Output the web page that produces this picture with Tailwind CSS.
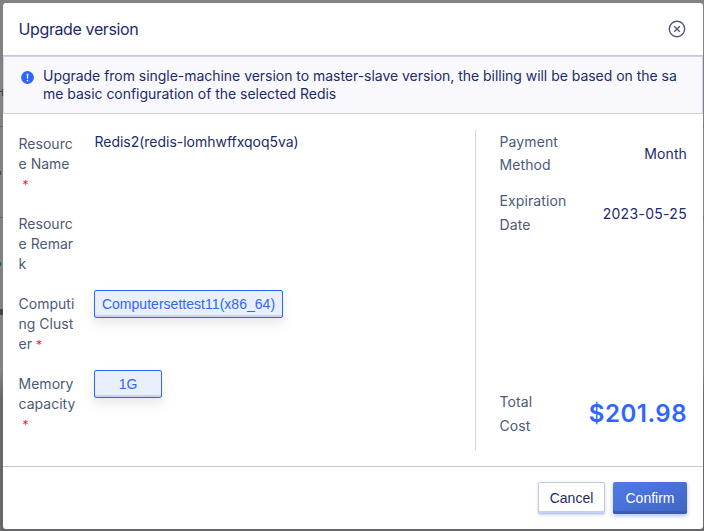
<!DOCTYPE html>
<html lang="en">
<head>
<meta charset="utf-8">
<title>Upgrade version</title>
<script src="https://cdn.jsdelivr.net/npm/@tailwindcss/browser@4"></script>
</head>
<body class="relative h-[531px] w-[704px] overflow-hidden bg-[#767676] bg-linear-to-b from-[#828282] from-70% to-[#68686b] to-75% pl-[3px] pt-[3px] font-['Inter',sans-serif] text-sm font-[370] text-[#1c2b69]">
  <!-- dimmed page edge behind the dialog -->
  <div class="absolute left-0 top-[91px] h-px w-[3px] bg-[#444]"></div>
  <div class="absolute left-[2px] top-[89px] h-[7px] w-px bg-[#444]"></div>
  <div class="absolute left-0 top-[126px] h-px w-[704px] bg-[#66666c]"></div>
  <div class="absolute left-0 top-[171px] h-[4px] w-[1px] bg-[#176b25]"></div>
  <div class="absolute left-0 top-[217px] h-px w-[704px] bg-[#66666c]"></div>
  <div class="absolute left-0 top-[262px] h-[4px] w-[1px] bg-[#176b25]"></div>
  <div class="absolute left-0 top-[309px] h-[6px] w-[3px] bg-[#454547]"></div>

  <div class="relative flex h-[526px] w-[700px] flex-col rounded-[3px] bg-white">
    <header class="flex h-[53px] shrink-0 items-center justify-between border-b border-[#c3cae0] pl-[15.5px] pr-[17px]">
      <h1 class="text-base leading-6 tracking-[-0.38px]">Upgrade version</h1>
      <svg class="size-[18px]" viewBox="0 0 18 18" fill="none" stroke="#4c5b76" stroke-width="1.4"><circle cx="9" cy="9" r="7.7"/><path d="M6.2 6.2l5.6 5.6M11.8 6.2l-5.6 5.6"/></svg>
    </header>
    <div class="flex h-[58px] shrink-0 border border-[#d0d2e8] bg-[#f9f9fd] pl-[17px] pt-[10px]">
      <svg class="mr-[9px] mt-1 size-[13px]" viewBox="0 0 13 13"><circle cx="6.5" cy="6.5" r="6.4" fill="#2f66ff"/><path d="M5.7 2.8h1.6l-.3 4.9H6z" fill="#fff"/><circle cx="6.5" cy="9.5" r=".85" fill="#fff"/></svg>
      <p class="whitespace-nowrap leading-[18px] tracking-[-0.03px]">Upgrade from single-machine version to master-slave version, the billing will be based on the sa<br>me basic configuration of the selected Redis</p>
    </div>

    <main class="flex h-[352px] shrink-0 py-4 pl-[15.5px] pr-4">
      <div class="flex w-[457.5px] flex-col gap-5 border-r border-[#d0d4e8] pt-1 tracking-[0.02px]">
        <div class="flex h-[60px]">
          <div class="w-[76px] whitespace-pre leading-5 text-[#4c5b76]">Resourc<br>e Name<br><span class="pl-1 text-xs font-normal text-[#f5222d]">*</span></div>
          <div class="-mt-0.5 leading-5 tracking-[-0.02px]">Redis2(redis-lomhwffxqoq5va)</div>
        </div>
        <div class="h-[60px] leading-5 text-[#4c5b76]">Resourc<br>e Remar<br>k</div>
        <div class="flex h-[60px] items-start">
          <div class="w-[75.5px] leading-5 text-[#4c5b76]">Computi<br>ng Clust<br>er <span class="text-xs font-normal text-[#f5222d]">*</span></div>
          <button class="-mt-1 h-7 w-[189px] rounded-[2px] border border-[#2f66ff] bg-[#e9effd] font-['Liberation_Sans',sans-serif] text-sm tracking-[0.03px] text-[#2f66ff] shadow-[inset_0_-2px_0_#c4d3f5,0_6px_12px_rgba(54,67,92,0.12)]">Computersettest11(x86_64)</button>
        </div>
        <div class="flex h-[60px] items-start">
          <div class="w-[75.5px] leading-5 text-[#4c5b76]">Memory<br>capacity<br><span class="pl-1 text-xs font-normal text-[#f5222d]">*</span></div>
          <button class="-mt-1 h-7 w-[68px] rounded-[2px] border border-[#2f66ff] bg-[#e9effd] font-['Liberation_Sans',sans-serif] text-sm tracking-normal text-[#2f66ff] shadow-[inset_0_-2px_0_#c4d3f5,0_6px_12px_rgba(54,67,92,0.12)]">1G</button>
        </div>
      </div>
      <aside class="flex flex-1 flex-col pl-[23.5px] leading-6 tracking-[0.1px]">
        <div class="flex h-[48px] items-center justify-between"><div class="-mt-[2px] leading-[23px] text-[#4c5b76]">Payment<br>Method</div><div>Month</div></div>
        <div class="mt-[11px] flex h-[48px] items-center justify-between"><div class="text-[#4c5b76]">Expiration<br>Date</div><div class="pt-[2px] tracking-[0.3px]">2023-05-25</div></div>
        <div class="mb-3 mt-auto flex h-[48px] items-center justify-between"><div class="text-[#4c5b76]">Total<br>Cost</div><div class="text-2xl font-[570] tracking-[0.5px] text-[#2f66ff]">$201.98</div></div>
      </aside>
    </main>

    <footer class="flex flex-1 justify-end gap-2 border-t border-[#c3cae0] pr-4 pt-[15px]">
      <button class="h-8 w-[67px] rounded-[2px] border border-[#c3cae0] bg-white font-['Liberation_Sans',sans-serif] text-sm font-normal shadow-[inset_0_-2px_0_#bfd2ff,0_1px_3px_rgba(54,67,92,0.25)]">Cancel</button>
      <button class="h-8 w-[74px] rounded-[2px] bg-linear-to-br from-[#507aea] to-[#4065c2] font-['Liberation_Sans',sans-serif] text-sm font-normal text-white shadow-[inset_0_-3px_0_#3b5cb0,0_2px_4px_rgba(47,102,255,0.4)]">Confirm</button>
    </footer>
  </div>
</body>
</html>
